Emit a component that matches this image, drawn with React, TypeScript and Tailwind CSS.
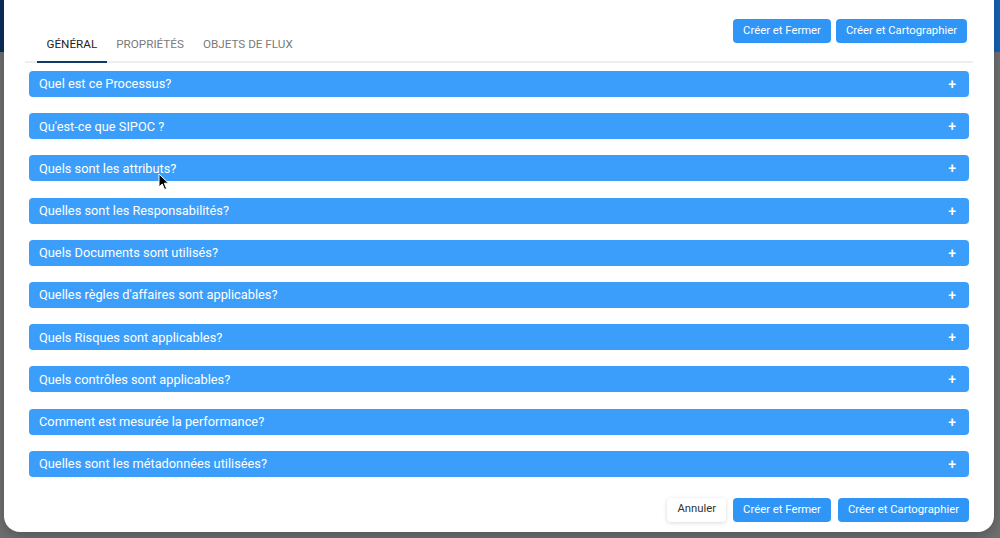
import React, { useState } from 'react'

const QUESTIONS = [
  'Quel est ce Processus?',
  "Qu'est-ce que SIPOC ?",
  'Quels sont les attributs?',
  'Quelles sont les Responsabilités?',
  'Quels Documents sont utilisés?',
  "Quelles règles d'affaires sont applicables?",
  'Quels Risques sont applicables?',
  'Quels contrôles sont applicables?',
  'Comment est mesurée la performance?',
  'Quelles sont les métadonnées utilisées?',
]

const TABS = ['GÉNÉRAL', 'PROPRIÉTÉS', 'OBJETS DE FLUX']

function PrimaryButton({ children }: { children: React.ReactNode }) {
  return (
    <button className="h-[24px] px-[10px] rounded-[4px] bg-[#2f96f7] text-white text-[11.3px] leading-none whitespace-nowrap">
      {children}
    </button>
  )
}

export default function App() {
  const [tab, setTab] = useState(0)
  const [open, setOpen] = useState<number | null>(null)

  return (
    <div
      className="relative w-[1000px] h-[538px] overflow-hidden bg-[#707070]"
      style={{ fontFamily: 'Roboto, "Noto Sans", sans-serif' }}
    >
      {/* app header peeking behind the dialog */}
      <div className="absolute top-0 left-0 right-0 h-[52px] bg-gradient-to-r from-[#0b2f5c] to-[#1463b8]" />

      {/* dialog */}
      <div className="absolute left-[4px] right-[6px] top-[-20px] bottom-[6px] rounded-[16px] bg-white flex flex-col px-[21px] pt-[39px] shadow-[0_4px_14px_rgba(0,0,0,0.25)]">
        {/* header: tabs + actions */}
        <div className="flex justify-between border-b-2 border-[#eeeeee]">
          <div className="flex self-end pl-[12px] mb-[-2px]">
            {TABS.map((t, i) => (
              <button
                key={t}
                onClick={() => setTab(i)}
                className={`px-[9.5px] pt-[12px] pb-[10px] text-[11.7px] leading-[14px] border-b-2 ${
                  tab === i ? 'text-[#222222] border-[#0d3a66]' : 'text-[#7a7a7a] border-transparent'
                }`}
              >
                {t}
              </button>
            ))}
          </div>
          <div className="flex gap-[5px] self-start mb-[18px] mr-[6px]">
            <PrimaryButton>Créer et Fermer</PrimaryButton>
            <PrimaryButton>Créer et Cartographier</PrimaryButton>
          </div>
        </div>

        {/* accordion */}
        <div className="flex flex-col gap-[16.2px] px-[4px] mt-[8px]">
          {QUESTIONS.map((q, i) => (
            <div key={q}>
              <button
                onClick={() => setOpen(open === i ? null : i)}
                className="w-full h-[26px] flex items-center justify-between pl-[10px] pr-[13px] rounded-[4px] bg-[#3b9efb] text-white text-[12.8px]"
              >
                <span>{q}</span>
                <span className="text-[14px] font-medium leading-none">{open === i ? '−' : '+'}</span>
              </button>
            </div>
          ))}
        </div>

        {/* footer */}
        <div className="flex justify-end gap-[7px] mt-[21px] pr-[4px]">
          <button className="h-[24px] px-[10px] rounded-[4px] bg-white text-[#333333] text-[11.3px] shadow-[0_1px_4px_rgba(0,0,0,0.15)]">
            Annuler
          </button>
          <PrimaryButton>Créer et Fermer</PrimaryButton>
          <PrimaryButton>Créer et Cartographier</PrimaryButton>
        </div>
      </div>

      {/* mouse pointer */}
      <svg className="absolute left-[158px] top-[173px]" width="12" height="18" viewBox="0 0 12 18">
        <path d="M1 1 L1 14 L4.2 11 L6.6 16.5 L8.6 15.6 L6.3 10.2 L10.6 10.2 Z" fill="#000" stroke="#fff" strokeWidth="1" />
      </svg>
    </div>
  )
}
